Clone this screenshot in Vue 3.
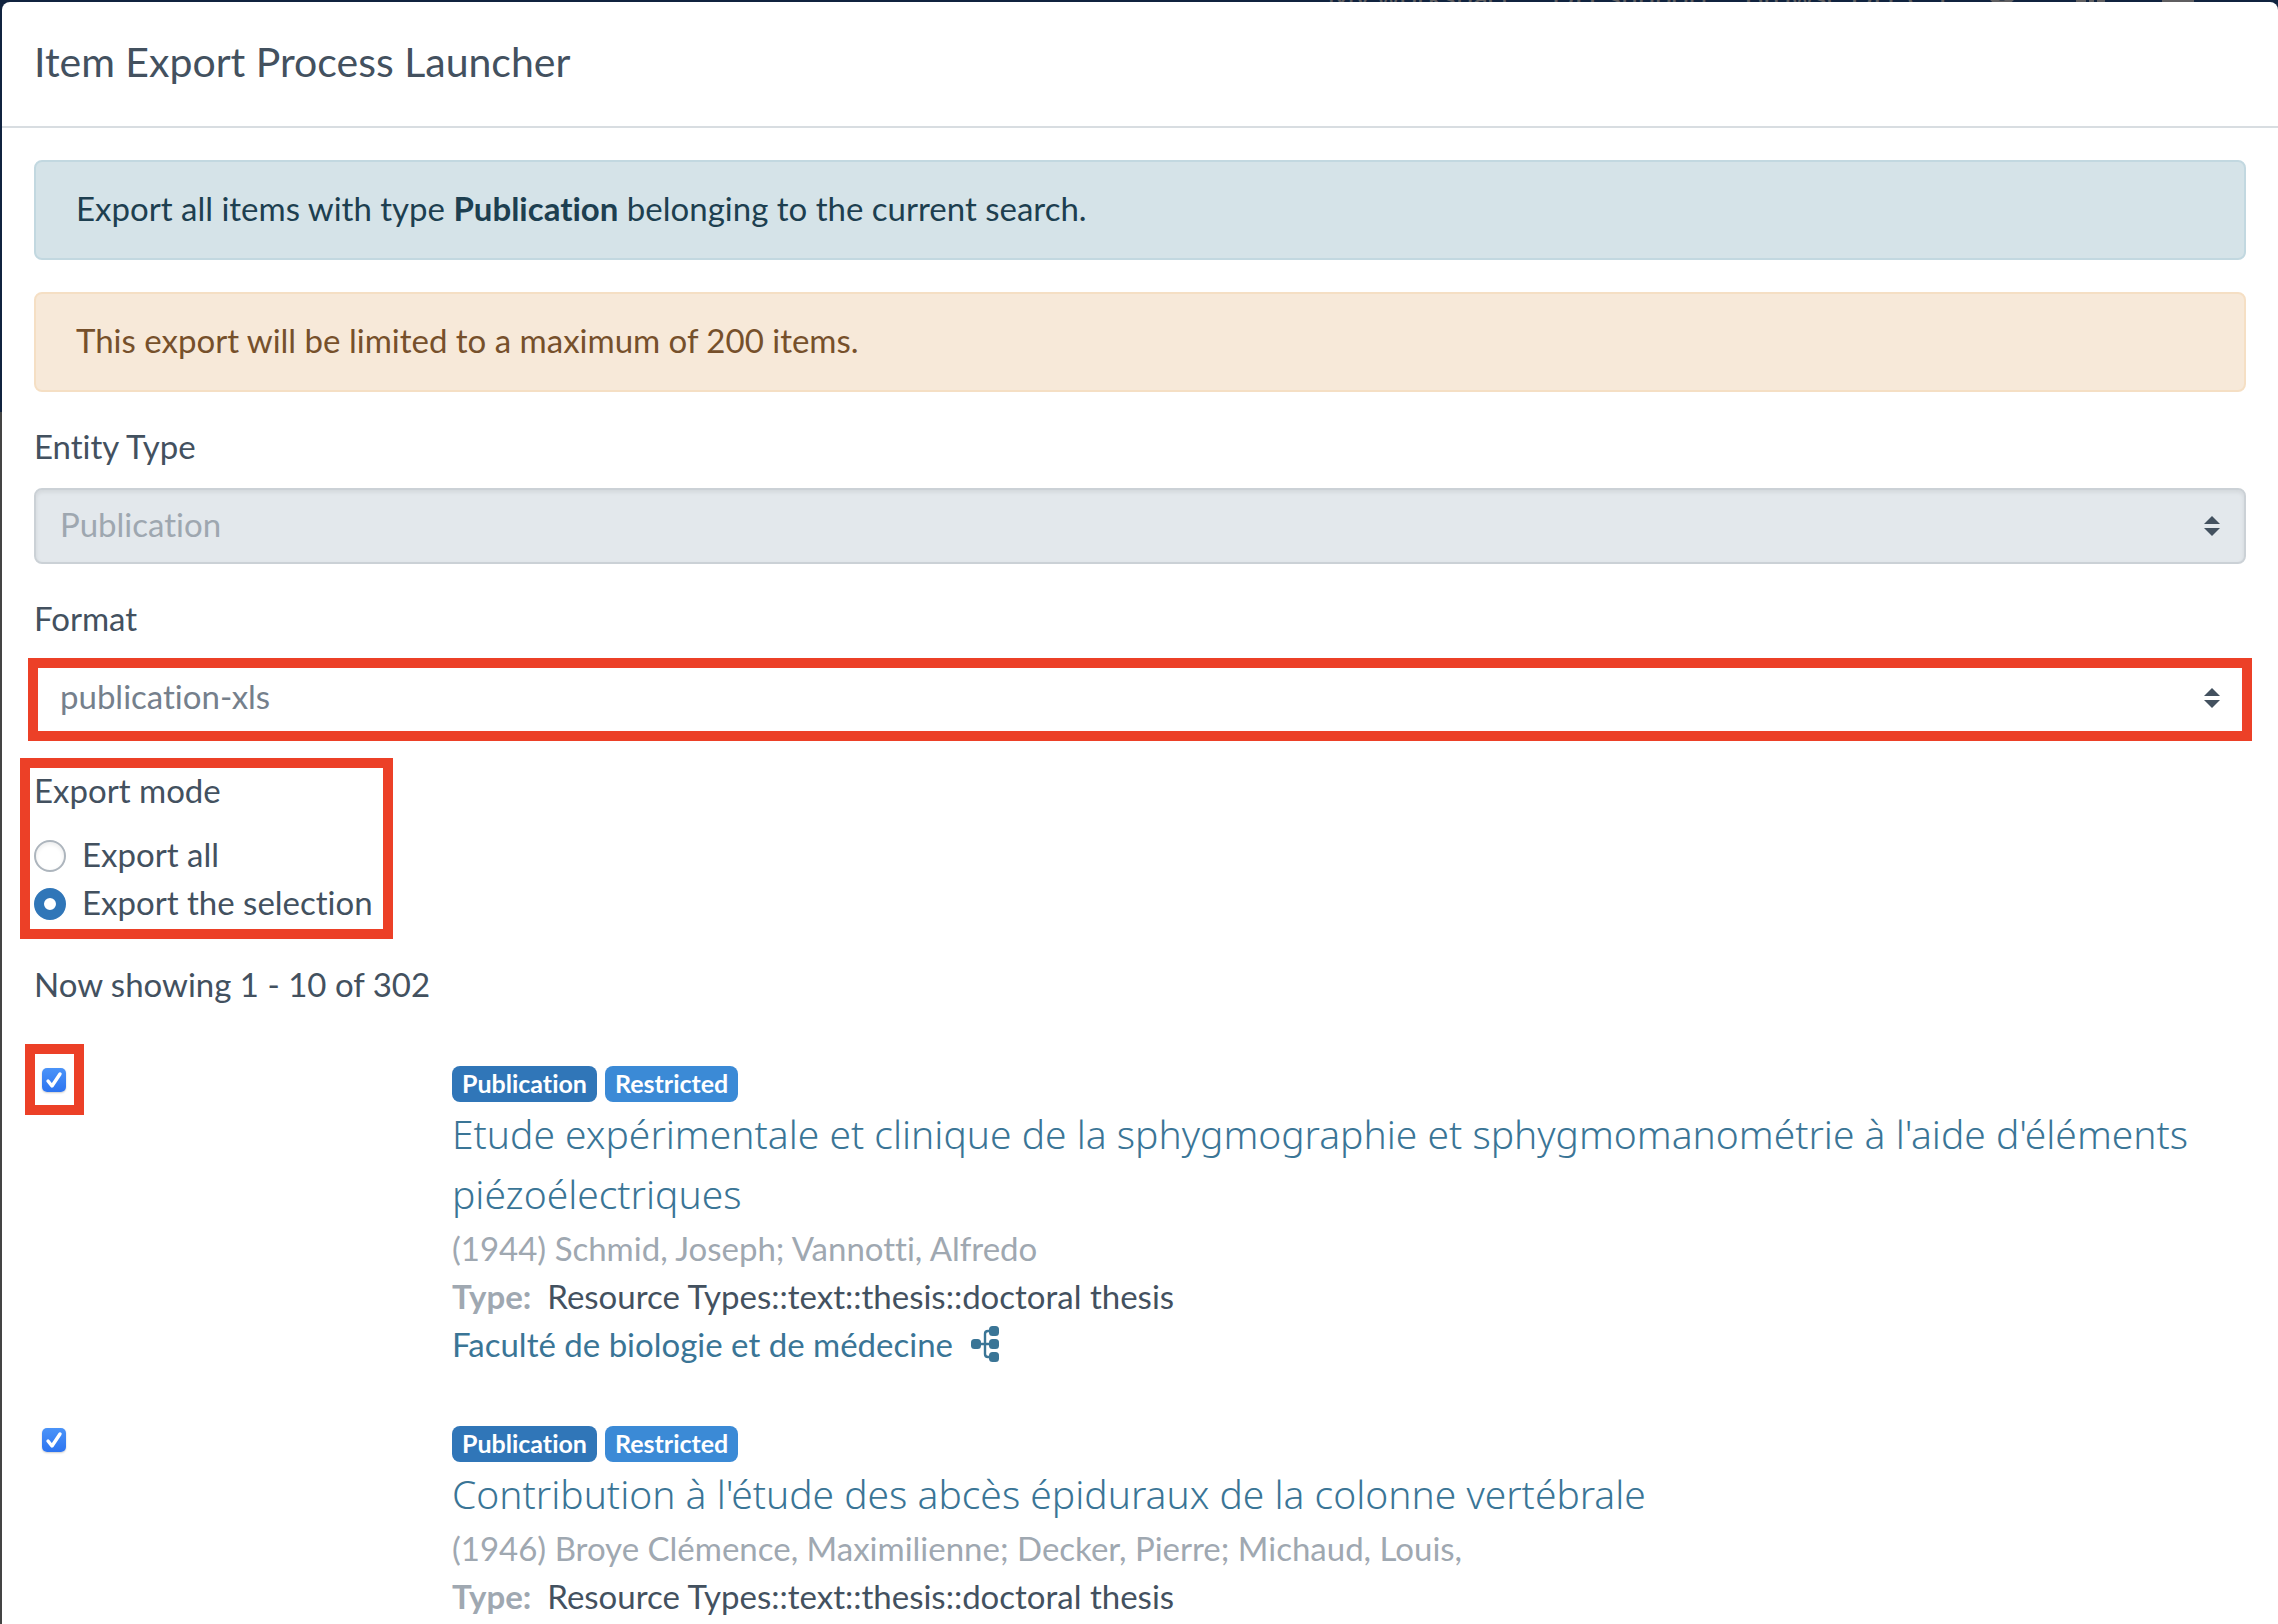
<script setup>
import { ref } from 'vue'

const navItems = ['My workspace', 'DIY support', 'Browse DIY C Y']
const exportMode = ref('selection')
const modes = [
  { value: 'all', label: 'Export all' },
  { value: 'selection', label: 'Export the selection' },
]
const items = ref([
  {
    id: 'item-1',
    selected: true,
    marked: true,
    title: "Etude expérimentale et clinique de la sphygmographie et sphygmomanométrie à l'aide d'éléments piézoélectriques",
    authors: '(1944) Schmid, Joseph; Vannotti, Alfredo',
    type: 'Resource Types::text::thesis::doctoral thesis',
    unit: 'Faculté de biologie et de médecine',
  },
  {
    id: 'item-2',
    selected: true,
    marked: false,
    title: "Contribution à l'étude des abcès épiduraux de la colonne vertébrale",
    authors: '(1946) Broye Clémence, Maximilienne; Decker, Pierre; Michaud, Louis,',
    type: 'Resource Types::text::thesis::doctoral thesis',
    unit: '',
  },
])
</script>

<template>
  <div class="page">
    <div class="backdrop" aria-hidden="true">
      <div class="site-nav">
        <span v-for="n in navItems" :key="n">{{ n }}</span>
        <div class="nav-icons">
          <svg viewBox="0 0 32 32"><circle cx="16" cy="16" r="13" fill="none" stroke="currentColor" stroke-width="5" /></svg>
          <svg viewBox="0 0 32 32"><path d="M2 4h10v24H2zM15 4h5v24h-5zM23 4h8v24h-8z" fill="currentColor" /></svg>
          <svg viewBox="0 0 32 32"><path d="M0 4h32v24H0z" fill="currentColor" /></svg>
        </div>
      </div>
    </div>

    <main class="modal">
      <header class="modal-header">
        <h1>Item Export Process Launcher</h1>
      </header>

      <form class="modal-body" @submit.prevent>
        <div class="alert info">
          Export all items with type <strong>Publication</strong> belonging to the current search.
        </div>
        <div class="alert warning">This export will be limited to a maximum of 200 items.</div>

        <div class="field">
          <label for="entity-type">Entity Type</label>
          <div class="select-wrap">
            <select id="entity-type" disabled>
              <option>Publication</option>
            </select>
            <svg class="arrows" viewBox="0 0 16 20" aria-hidden="true"><path d="M8 0l8 8H0zM8 20l8-8H0z" /></svg>
          </div>
        </div>

        <div class="field">
          <label for="format">Format</label>
          <div class="select-wrap">
            <select id="format">
              <option>publication-xls</option>
            </select>
            <svg class="arrows" viewBox="0 0 16 20" aria-hidden="true"><path d="M8 0l8 8H0zM8 20l8-8H0z" /></svg>
            <span class="mark mark-select"></span>
          </div>
        </div>

        <div class="mode" role="radiogroup" aria-labelledby="mode-label">
          <div id="mode-label" class="mode-title">Export mode</div>
          <label v-for="m in modes" :key="m.value" class="radio">
            <input v-model="exportMode" type="radio" name="mode" :value="m.value" />
            <span>{{ m.label }}</span>
          </label>
          <span class="mark mark-mode"></span>
        </div>

        <p class="count">Now showing 1 - 10 of 302</p>

        <ul class="results">
          <li v-for="item in items" :key="item.id" class="result">
            <div class="pick">
              <div class="check">
                <input :id="item.id" v-model="item.selected" type="checkbox" :aria-label="item.title" />
                <svg viewBox="0 0 24 24" aria-hidden="true"><path d="M6 13l4 5L18 6" /></svg>
                <span v-if="item.marked" class="mark mark-check"></span>
              </div>
            </div>
            <div class="details">
              <div class="badges">
                <span class="badge primary">Publication</span>
                <span class="badge secondary">Restricted</span>
              </div>
              <a class="title" href="#">{{ item.title }}</a>
              <div class="authors">{{ item.authors }}</div>
              <div class="type"><strong>Type:</strong><span>{{ item.type }}</span></div>
              <a v-if="item.unit" class="unit" href="#">
                <span>{{ item.unit }}</span>
                <svg viewBox="0 0 28 36" aria-hidden="true">
                  <path d="M8 18h12M20 5h-3q-3 0-3 3v20q0 3 3 3h3" fill="none" stroke="currentColor" stroke-width="2.4" />
                  <rect x="0" y="13" width="10" height="10" rx="3.5" fill="currentColor" />
                  <rect x="18" y="0" width="10" height="10" rx="3.5" fill="currentColor" />
                  <rect x="18" y="13" width="10" height="10" rx="3.5" fill="currentColor" />
                  <rect x="18" y="26" width="10" height="10" rx="3.5" fill="currentColor" />
                </svg>
              </a>
            </div>
          </li>
        </ul>
      </form>
    </main>
  </div>
</template>

<style>
html,
body {
  margin: 0;
  background: #444444;
  overflow: hidden;
}
</style>

<style scoped>
.page {
  display: grid;
  min-height: 100vh;
  font: 33px/48px Lato, "Noto Sans", sans-serif;
  font-variant-ligatures: none;
  color: #43515f;
}
.page * {
  box-sizing: border-box;
}
.backdrop,
.modal {
  grid-area: 1 / 1;
  min-width: 0;
}
.site-nav {
  display: flex;
  justify-content: flex-end;
  gap: 34px;
  height: 412px;
  padding-right: 84px;
  overflow: hidden;
  background: #10233f;
  color: #5f5e60;
  font-size: 30px;
}
.site-nav span {
  margin-top: -28px;
}
.nav-icons {
  display: flex;
  gap: 56px;
  margin-top: -26px;
}
.nav-icons svg {
  width: 32px;
  height: 32px;
}
.modal {
  margin: 2px 0 0 2px;
  background: #fff;
  border-radius: 8px 8px 0 0;
  z-index: 1;
}
.modal-header {
  padding: 30px 32px 34px;
  border-bottom: 2px solid #d8dde1;
}
h1 {
  margin: 0;
  font-size: 41px;
  line-height: 60px;
  font-weight: 400;
}
.modal-body {
  display: flex;
  flex-direction: column;
  gap: 32px;
  padding: 32px;
}
.alert {
  padding: 22px 40px 26px;
  border: 2px solid;
  border-radius: 8px;
}
.info {
  color: #1d3f50;
  background: #d5e3e8;
  border-color: #c2d8e0;
}
.warning {
  color: #76502b;
  background: #f7e9d9;
  border-color: #f5dfc4;
}
.field {
  display: flex;
  flex-direction: column;
  gap: 18px;
  margin-top: -2px;
}
.select-wrap {
  position: relative;
}
select {
  display: block;
  width: 100%;
  height: 76px;
  padding: 0 60px 4px 24px;
  border: 2px solid #cbd1d6;
  border-radius: 8px;
  background: #fff;
  box-shadow: inset 0 2px 4px rgba(0, 0, 0, 0.08);
  color: #75808c;
  font: inherit;
  font-variant-ligatures: none;
  appearance: none;
}
select:disabled {
  background: #e3e8ec;
  color: #9ea7b0;
  opacity: 1;
}
.arrows {
  position: absolute;
  right: 26px;
  top: 28px;
  width: 16px;
  height: 20px;
  fill: #43515f;
  pointer-events: none;
}
.mark {
  position: absolute;
  border: 10px solid #ec4027;
  pointer-events: none;
}
.mark-select {
  inset: -2px -6px -5px;
}
.mode {
  position: relative;
  width: fit-content;
  margin-top: -2px;
}
.mark-mode {
  inset: -8px -20px -11px -14px;
}
.mode-title {
  margin-bottom: 18px;
}
.radio {
  display: flex;
  align-items: center;
  gap: 16px;
  height: 48px;
}
.radio span {
  padding-bottom: 4px;
}
.radio input {
  appearance: none;
  width: 32px;
  height: 32px;
  margin: 0;
  border: 2px solid #adb5bd;
  border-radius: 50%;
  background: #fff;
  box-shadow: inset 0 2px 4px rgba(0, 0, 0, 0.08);
}
.radio input:checked {
  border: 10px solid #3076b8;
  box-shadow: none;
}
.count {
  margin: 0;
}
.results {
  display: flex;
  flex-direction: column;
  gap: 48px;
  margin: 16px 0 0;
  padding: 0;
  list-style: none;
}
.result {
  display: grid;
  grid-template-columns: 418px 1fr;
}
.pick {
  padding: 12px 8px;
}
.check {
  position: relative;
  width: 24px;
  height: 24px;
}
.check input {
  display: block;
  appearance: none;
  width: 24px;
  height: 24px;
  margin: 0;
  border-radius: 5px;
  background: #fff;
  box-shadow: 0 1px 2px rgba(0, 0, 0, 0.2);
}
.check input:checked {
  background: linear-gradient(#4a93f8, #2d74f0);
}
.check svg {
  position: absolute;
  inset: 0;
  fill: none;
  stroke: #fff;
  stroke-width: 3.4;
  stroke-linecap: round;
  stroke-linejoin: round;
  pointer-events: none;
}
.mark-check {
  inset: -24px -18px -23px -17px;
}
.details {
  display: flex;
  flex-direction: column;
  align-items: flex-start;
}
.badges {
  display: flex;
  align-items: center;
  gap: 8px;
  height: 48px;
  padding-top: 8px;
}
.badge {
  padding: 5px 10px 7px;
  border-radius: 8px;
  color: #fff;
  font-size: 25px;
  line-height: 24px;
  font-weight: 700;
}
.primary {
  background: #3076b8;
}
.secondary {
  background: #3b8ad6;
}
a {
  color: #3a7596;
  text-decoration: none;
}
.title {
  font-family: "Noto Sans", sans-serif;
  font-size: 39px;
  line-height: 60px;
  font-weight: 300;
}
.authors {
  color: #9fa8b1;
}
.type {
  display: flex;
  gap: 16px;
}
.type strong {
  color: #9fa8b1;
}
.unit {
  display: flex;
  align-items: center;
  gap: 18px;
}
.unit svg {
  width: 28px;
  height: 36px;
}
</style>
